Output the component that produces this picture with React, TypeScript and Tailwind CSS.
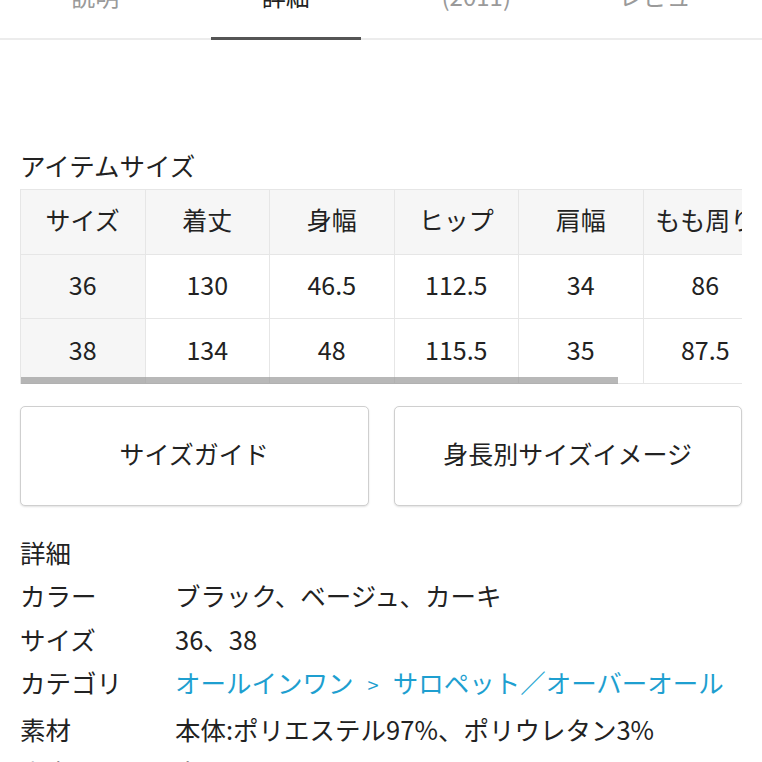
const tabs = [
  { label: "説明", active: false },
  { label: "詳細", active: true },
  { label: "(2011)", active: false },
  { label: "レビュー", active: false },
];

const headers = ["サイズ", "着丈", "身幅", "ヒップ", "肩幅", "もも周り", "股下"];

const rows = [
  ["36", "130", "46.5", "112.5", "34", "86", "76"],
  ["38", "134", "48", "115.5", "35", "87.5", "77"],
];

const details = [
  { label: "カラー", value: "ブラック、ベージュ、カーキ" },
  { label: "サイズ", value: "36、38" },
  { label: "素材", value: "本体:ポリエステル97%、ポリウレタン3%" },
  { label: "生産国", value: "中国" },
];

export default function App() {
  return (
    <div className="w-[762px] overflow-hidden bg-white font-['Noto_Sans_CJK_JP',sans-serif] text-[#222]">
      {/* tab bar, scrolled partly out of view */}
      <div className="-mt-[17px] flex border-b-2 border-[#ececec]">
        {tabs.map((tab) => (
          <div key={tab.label} className="relative h-[55px] flex-1 text-center">
            <span className={`text-[24px] leading-[26px] ${tab.active ? "text-[#222]" : "text-[#9a9a9a]"}`}>
              {tab.label}
            </span>
            {tab.active && <div className="absolute -bottom-[2px] left-5 right-5 h-[3px] bg-[#555]" />}
          </div>
        ))}
      </div>

      <div className="px-5">
        <h2 className="mt-[107px] text-[25.5px] leading-[36px] font-normal">アイテムサイズ</h2>

        <div className="relative mt-[6px] w-[722px] overflow-hidden border-t border-l border-[#e6e6e6]">
          <div className="grid w-max grid-cols-[repeat(7,124.5px)]">
            {headers.map((h) => (
              <div
                key={h}
                className="flex h-[64.5px] items-center justify-center whitespace-nowrap border-r border-b border-[#e6e6e6] bg-[#f6f6f6] pb-[4px] text-[25px]"
              >
                {h}
              </div>
            ))}
            {rows.map((row) =>
              row.map((cell, i) => (
                <div
                  key={`${row[0]}-${i}`}
                  className={`flex h-[64.5px] items-center justify-center border-r border-b border-[#e6e6e6] pb-[3px] text-[25px] ${
                    i === 0 ? "bg-[#f6f6f6]" : "bg-white"
                  }`}
                >
                  {cell}
                </div>
              ))
            )}
          </div>
          <div className="absolute bottom-0 left-0 h-[7px] w-[597px] bg-[#9a9a9a]/70" />
        </div>

        <div className="mt-[22px] grid grid-cols-2 gap-[25px]">
          {["サイズガイド", "身長別サイズイメージ"].map((b) => (
            <button
              key={b}
              className="flex h-[100px] items-center justify-center rounded-[5px] border border-[#cfcfcf] bg-white pb-[3px] text-[25px] text-[#222] shadow-[0_1px_2px_rgba(0,0,0,0.12)]"
            >
              {b}
            </button>
          ))}
        </div>

        <div className="mt-[24px] text-[25.5px] leading-[43.5px]">
          <p>詳細</p>
          {details.slice(0, 2).map((d) => (
            <div key={d.label} className="flex">
              <span className="w-[155px] shrink-0">{d.label}</span>
              <span className="whitespace-nowrap">{d.value}</span>
            </div>
          ))}
          <div className="flex">
            <span className="w-[155px] shrink-0">カテゴリ</span>
            <span className="whitespace-nowrap text-[#1e9fd0]">
              オールインワン<span className="mx-[14px] text-[20px]">&gt;</span>サロペット／オーバーオール
            </span>
          </div>
          {details.slice(2).map((d) => (
            <div key={d.label} className="flex">
              <span className="w-[155px] shrink-0">{d.label}</span>
              <span className="whitespace-nowrap">{d.value}</span>
            </div>
          ))}
        </div>
      </div>
    </div>
  );
}
